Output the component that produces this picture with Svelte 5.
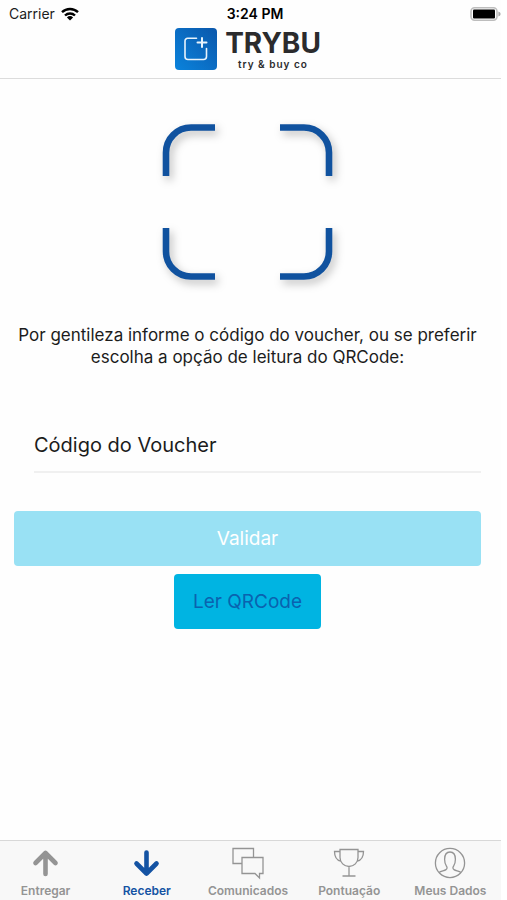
<script>
  let code = $state('')
  let active = $state('receber')

  const tabs = [
    { id: 'entregar', label: 'Entregar' },
    { id: 'receber', label: 'Receber' },
    { id: 'comunicados', label: 'Comunicados' },
    { id: 'pontuacao', label: 'Pontuação' },
    { id: 'dados', label: 'Meus Dados' }
  ]
</script>

<div class="screen">
  <header>
    <div class="status-bar">
      <div class="carrier">
        <span>Carrier</span>
        <svg width="18" height="14" viewBox="0 0 18 14" aria-hidden="true">
          <g fill="none" stroke="#000" stroke-width="2.4">
            <path d="M1 5.2a11.5 11.5 0 0 1 16 0" />
            <path d="M4 8.5a7.2 7.2 0 0 1 10 0" />
          </g>
          <path d="M9 13.6 5.9 10.5a4.5 4.5 0 0 1 6.2 0z" />
        </svg>
      </div>
      <span class="time">3:24 PM</span>
      <svg class="battery" width="31" height="14" viewBox="0 0 31 14" aria-hidden="true">
        <rect x="1" y="0.8" width="26" height="12.4" rx="3.6" fill="#fff" stroke="#bdbdbd" stroke-width="1.6" />
        <rect x="3" y="2.6" width="22" height="8.8" rx="1" />
        <path d="M28.4 4.6q2.2.8 2.2 2.4t-2.2 2.4z" fill="#a8a8a8" />
      </svg>
    </div>

    <div class="brand">
      <svg width="42" height="42" viewBox="0 0 42 42" aria-hidden="true">
        <defs>
          <linearGradient id="logo" x1="0" y1="1" x2="1" y2="0">
            <stop offset="0" stop-color="#0a83dc" />
            <stop offset="1" stop-color="#0b57ab" />
          </linearGradient>
        </defs>
        <rect width="42" height="42" rx="4" fill="url(#logo)" />
        <g fill="none" stroke="#e8f3fc" stroke-width="1.6" stroke-linecap="round">
          <path d="M21.5 10.3H12.6a2.6 2.6 0 0 0-2.6 2.6V28.5a3 3 0 0 0 3 3H28.5a3 3 0 0 0 3-3V20.5" />
          <path d="M27 10v9M22.5 14.5h9" stroke-width="2" />
        </g>
      </svg>
      <div class="brand-text">
        <strong>TRYBU</strong>
        <span>try &amp; buy co</span>
      </div>
    </div>
  </header>

  <main>
    <svg class="scan" width="190" height="178" viewBox="0 0 190 178" aria-hidden="true">
      <g fill="none" stroke="#10529f" stroke-width="6.6">
        <path d="M62 13.5H38a25 25 0 0 0-25 25V62" />
        <path d="M127 13.5h24a25 25 0 0 1 25 25V62" />
        <path d="M62 162.5H38a25 25 0 0 1-25-25V114" />
        <path d="M127 162.5h24a25 25 0 0 0 25-25V114" />
      </g>
    </svg>

    <p>Por gentileza informe o código do voucher, ou se preferir escolha a opção de leitura do QRCode:</p>

    <form onsubmit={(e) => e.preventDefault()}>
      <input type="text" aria-label="Código do Voucher" placeholder="Código do Voucher" bind:value={code} />
      <button type="submit" class="validate">Validar</button>
      <button type="button" class="read">Ler QRCode</button>
    </form>
  </main>

  <nav>
    {#each tabs as tab}
      <button type="button" class="tab" class:active={active === tab.id} onclick={() => (active = tab.id)}>
        <svg width="34" height="34" viewBox="0 0 34 34" aria-hidden="true">
          {#if tab.id === 'entregar'}
            <path class="bold" d="M16.5 28V7M6.500 17 16.500 7 26.500 17" />
          {:else if tab.id === 'receber'}
            <path class="bold" d="M16.500 6.500v21M6.500 17.500 16.500 27.500 26.500 17.500" />
          {:else if tab.id === 'comunicados'}
            <path d="M11 17.500H2V2.500h20.500v9" />
            <path d="M11 11.500h21v16h-3.500V32l-4.500-4.500H11z" />
          {:else if tab.id === 'pontuacao'}
            <path d="M8 3.500h18v8a9 9 0 0 1-18 0zM17 20.500V30M10.500 30h13" />
            <path d="M8 5.500H2.500c0 5 1.500 8.500 6.300 9.700M26 5.500h5.500c0 5-1.500 8.500-6.300 9.700" />
          {:else}
            <circle cx="17" cy="17" r="14.6" />
            <path d="M6 26.500c2-1.700 5-1.600 7-2.900 1.600-1 1.200-2.500.3-3.800-1.600-2.200-1.700-3.800-1.700-6.500 0-4.500 1.800-7.300 5.400-7.300s5.400 2.800 5.400 7.300c0 2.700-.1 4.300-1.700 6.500-.9 1.300-1.300 2.800.3 3.800 2 1.300 5 1.200 7 2.900" />
          {/if}
        </svg>
        <span>{tab.label}</span>
      </button>
    {/each}
  </nav>
</div>

<style>
  :global(body) {
    background: #fff;
    overflow-x: hidden;
  }

  .screen {
    display: flex;
    flex-direction: column;
    min-height: 100vh;
    margin: 0 6px 0 -5px;
    background: #fefefe;
    color: #1c1c1c;
    font-family: Inter, "Liberation Sans", sans-serif;
  }

  header {
    border-bottom: 1px solid #dcdcdc;
    padding-bottom: 8px;
  }

  /* Status bar */
  .status-bar {
    display: grid;
    grid-template-columns: 1fr auto 1fr;
    align-items: center;
    height: 28px;
    padding: 0 0 0 14px;
    font-size: 14px;
    line-height: 28px;
  }

  .carrier {
    display: flex;
    align-items: center;
    gap: 6px;
  }

  .time {
    color: #000;
    font-weight: 600;
  }

  .battery {
    justify-self: end;
  }

  /* Brand */
  .brand {
    display: flex;
    justify-content: center;
    gap: 8px;
  }

  .brand-text {
    display: flex;
    flex-direction: column;
    align-items: center;
    color: #2b2b2d;
  }

  .brand-text strong {
    font-size: 28px;
    line-height: 30px;
    font-weight: 700;
  }

  .brand-text span {
    font-size: 10px;
    line-height: 12px;
    font-weight: 600;
    letter-spacing: 1px;
  }

  /* Content */
  main {
    flex: 1;
    display: flex;
    flex-direction: column;
    align-items: center;
    padding: 35px 20px 20px 19px;
  }

  .scan {
    filter: drop-shadow(3px 4px 4px rgba(0, 0, 0, 0.25));
  }

  p {
    margin: 32px 0 0;
    font-size: 17px;
    line-height: 22px;
    text-align: center;
  }

  form {
    display: flex;
    flex-direction: column;
    align-items: center;
    align-self: stretch;
    margin-top: 50px;
  }

  input {
    align-self: stretch;
    box-sizing: border-box;
    height: 55px;
    margin: 0 0 38px 20px;
    padding: 0;
    border: 0;
    border-bottom: 2px solid #f0f0f0;
    border-radius: 0;
    background: transparent;
    color: inherit;
    font: inherit;
    font-size: 20px;
    outline: none;
  }

  input::placeholder {
    color: #1c1c1c;
    opacity: 1;
  }

  form button {
    height: 55px;
    border: 0;
    border-radius: 4px;
    font: inherit;
    font-size: 19px;
    cursor: pointer;
  }

  .validate {
    align-self: stretch;
    background: #99e1f4;
    color: #fff;
  }

  .read {
    margin-top: 8px;
    padding: 0 19px;
    background: #00b4e2;
    color: #0a62af;
  }

  /* Tab bar */
  nav {
    display: grid;
    grid-template-columns: repeat(5, 1fr);
    border-top: 1px solid #d8d8d8;
    background: #f8f8f8;
  }

  .tab {
    display: flex;
    flex-direction: column;
    align-items: center;
    gap: 3px;
    padding: 5px 0 2px;
    border: 0;
    background: transparent;
    color: #949494;
    font: inherit;
    font-size: 12px;
    line-height: 15px;
    font-weight: 600;
    cursor: pointer;
  }

  .tab.active {
    color: #1453a3;
  }

  .tab svg {
    fill: none;
    stroke: currentColor;
    stroke-width: 1.3;
  }

  .tab .bold {
    stroke-width: 4.6;
    stroke-linecap: round;
    stroke-linejoin: round;
  }
</style>
